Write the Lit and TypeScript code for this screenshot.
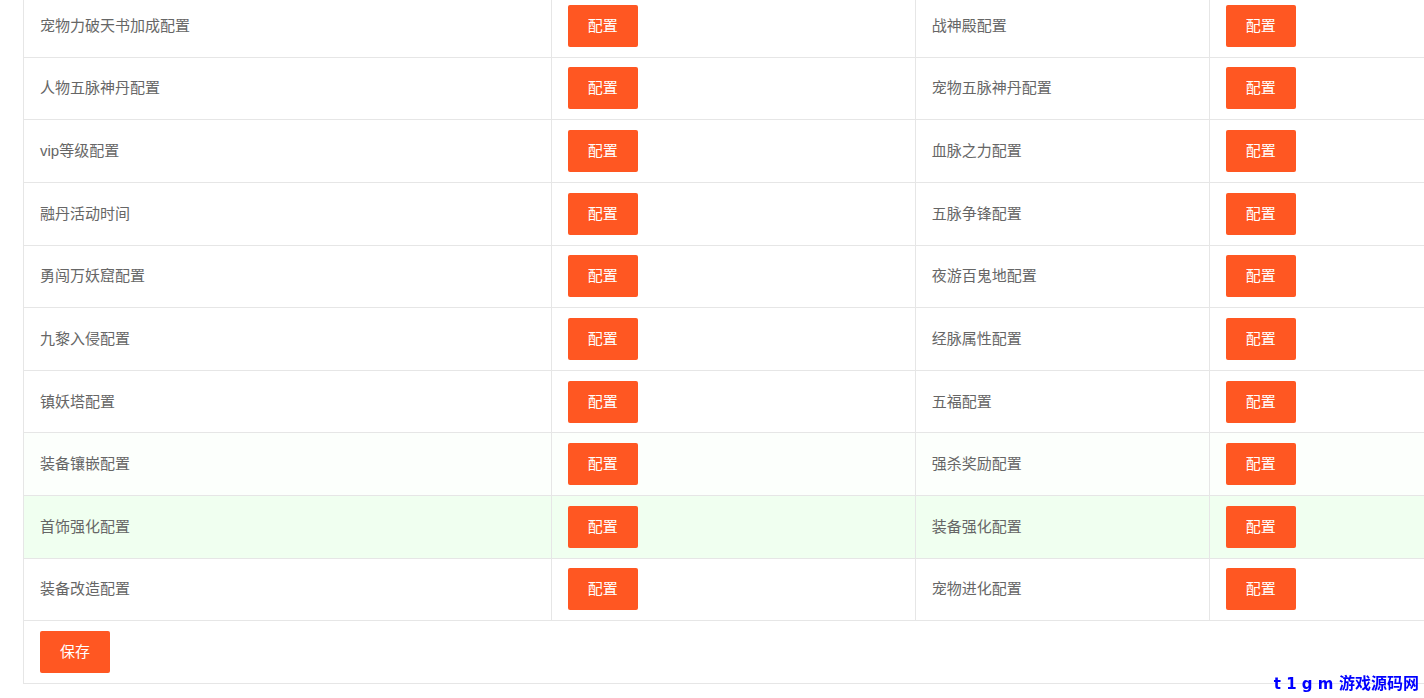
import { LitElement, html, css } from "lit";
import { customElement, property } from "lit/decorators.js";

type Tone = "" | "fading" | "active";

interface ConfigRow {
  left: string;
  right: string;
  tone?: Tone;
}

const ROWS: ConfigRow[] = [
  { left: "宠物力破天书加成配置", right: "战神殿配置" },
  { left: "人物五脉神丹配置", right: "宠物五脉神丹配置" },
  { left: "vip等级配置", right: "血脉之力配置" },
  { left: "融丹活动时间", right: "五脉争锋配置" },
  { left: "勇闯万妖窟配置", right: "夜游百鬼地配置" },
  { left: "九黎入侵配置", right: "经脉属性配置" },
  { left: "镇妖塔配置", right: "五福配置" },
  { left: "装备镶嵌配置", right: "强杀奖励配置", tone: "fading" },
  { left: "首饰强化配置", right: "装备强化配置", tone: "active" },
  { left: "装备改造配置", right: "宠物进化配置" },
];

@customElement("config-button")
export class ConfigButton extends LitElement {
  @property() label = "配置";
  @property() describes = "";

  static styles = css`
    :host {
      display: block;
    }
    .button {
      display: block;
      height: 42px;
      padding: 0 20px;
      border: 0;
      border-radius: 2px;
      background: #ff5722;
      color: #fff;
      font: inherit;
      line-height: 42px;
      white-space: nowrap;
      cursor: pointer;
    }
    .button:hover {
      opacity: 0.8;
    }
  `;

  render() {
    return html`<button class="button" type="button" title=${this.describes}>${this.label}</button>`;
  }
}

@customElement("app-root")
export class AppRoot extends LitElement {
  static styles = css`
    :host {
      display: block;
      min-height: 100vh;
      overflow: hidden;
      background: #fff;
      color: #666;
      font-family: "Liberation Sans", "Noto Sans CJK SC", sans-serif;
      font-size: 15px;
      line-height: 24px;
    }
    .content {
      padding-left: 23px;
    }
    .table {
      width: 100%;
      height: calc(100vh - 9px);
      margin-top: -5px;
      border-left: 1px solid #e6e6e6;
      border-collapse: separate;
      border-spacing: 0;
      table-layout: fixed;
    }
    .name-wide {
      width: 37.7%;
    }
    .action-wide {
      width: 26%;
    }
    .name-narrow {
      width: 21%;
    }
    .cell {
      box-sizing: border-box;
      padding: 9px 16px;
      border-right: 1px solid #e6e6e6;
      border-bottom: 1px solid #e6e6e6;
      font-weight: 400;
      text-align: left;
      vertical-align: middle;
    }
    .cell:last-child {
      border-right: 0;
    }
    .fading {
      background: #fcfffc;
    }
    .active {
      background: #f0fff0;
    }
    .site-mark {
      position: fixed;
      right: 5px;
      bottom: 2px;
      color: #00f;
      font-family: "DejaVu Sans", "Noto Sans CJK SC", sans-serif;
      font-size: 16px;
      font-weight: 700;
      line-height: 24px;
      white-space: nowrap;
    }
    .site-code {
      font-size: 15px;
    }
  `;

  render() {
    return html`
      <main class="content">
        <table class="table">
          <colgroup>
            <col class="name-wide" />
            <col class="action-wide" />
            <col class="name-narrow" />
            <col />
          </colgroup>
          <tbody>
            ${ROWS.map(
              (row) => html`
                <tr class=${row.tone ?? ""}>
                  <td class="cell">${row.left}</td>
                  <td class="cell"><config-button describes=${row.left}></config-button></td>
                  <td class="cell">${row.right}</td>
                  <td class="cell"><config-button describes=${row.right}></config-button></td>
                </tr>
              `
            )}
            <tr>
              <td class="cell" colspan="4"><config-button label="保存"></config-button></td>
            </tr>
          </tbody>
        </table>
      </main>
      <div class="site-mark"><span class="site-code">t 1 g m</span> 游戏源码网</div>
    `;
  }
}
